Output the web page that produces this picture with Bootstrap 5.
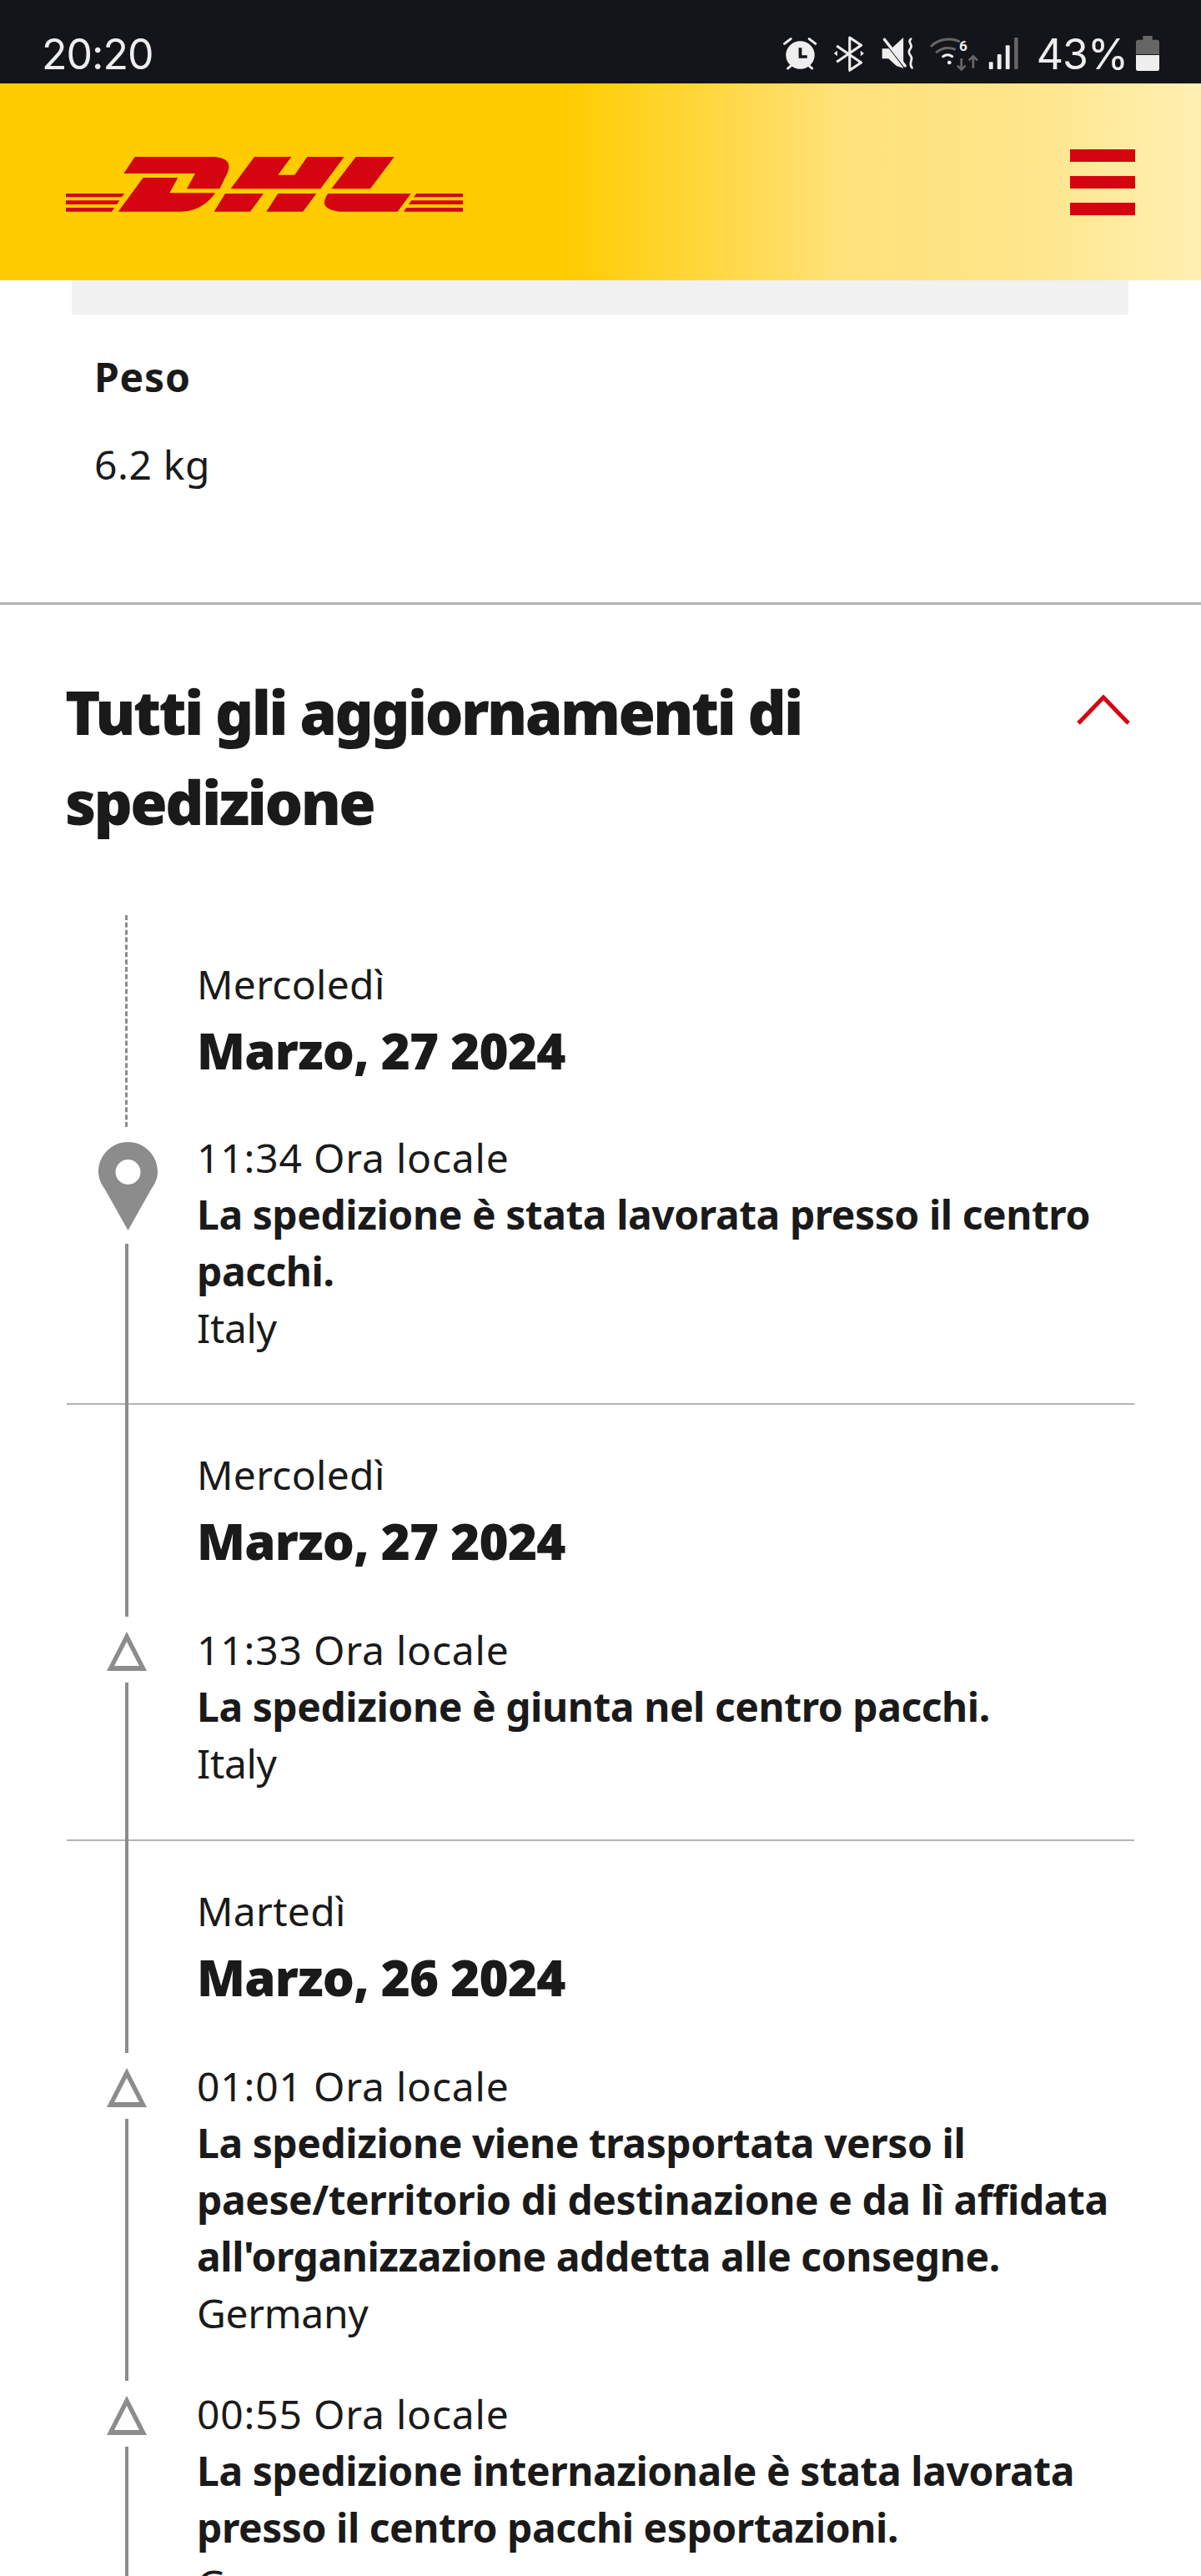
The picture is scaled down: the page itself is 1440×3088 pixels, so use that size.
<!DOCTYPE html>
<html lang="it">
<head>
<meta charset="utf-8">
<title>Tracking DHL</title>
<link href="https://cdn.jsdelivr.net/npm/bootstrap@5.3.0/dist/css/bootstrap.min.css" rel="stylesheet">
<style>
  html, body { height: 3088px; overflow: hidden; }
  body { background: #fff; color: #1a1a1a; font-family: "Noto Sans", "Liberation Sans", sans-serif; font-size: 48px; line-height: 68px; }

  .status-strip { height: 100px; background: #14151a; color: #eee; padding-left: 50px; padding-right: 50px; padding-top: 35px; font-family: Inter, Roboto, sans-serif; font-size: 50px; line-height: 60px; letter-spacing: -1px; }
  .status-icons { margin-top: 5px; }
  .status-pct { margin-left: 20px; margin-right: 10px; }
  .status-batt { margin-top: 8px; }

  .brand-bar { height: 236px; padding: 0 79px 0 60px; background: linear-gradient(90deg, #fc0 0, #fc0 47%, #ffe27a 70%, #ffe58a 85%, #fff0b2 100%); }
  .burger-mark { width: 78px; gap: 17px; }
  .burger-mark span { height: 15px; background: #d40511; }

  .grey-slab { height: 41px; margin: 0 87px 0 86px; background: #f1f1f1; }
  .weight-box { padding: 41px 0 0 113px; height: 348px; border-bottom: 3px solid #b3b3b3; }
  .weight-box p { margin: 0 0 37px; letter-spacing: .6px; }
  .weight-box .weight-label { font-weight: 700; letter-spacing: .8px; }

  .section-head { padding: 74px 85px 0 78px; height: 372px; }
  .section-head h2 { margin: 0; width: 980px; font-size: 72px; line-height: 108px; font-weight: 900; letter-spacing: -2.6px; color: #1a1a1a; }
  .section-head svg { margin-top: 34px; }

  .tl-group { margin: 0 80px; }
  .tl-group + .tl-group { border-top: 2px solid #b3b3b3; }
  .tl-row { display: flex; }
  .tl-rail { flex: 0 0 156px; width: 156px; display: flex; flex-direction: column; }
  .tl-line { flex: 1 1 auto; width: 4px; margin-left: 70px; margin-top: -2px; background: #8c8c8c; position: relative; }
  .tl-line-dashed { background: none; width: 3px; margin-top: 0; border-left: 3px dashed #8c8c8c; }
  .tl-icon { display: block; flex: none; margin-top: 18px; margin-bottom: 16px; }
  .tl-tri { width: 48px; height: 47px; margin-left: 48px; }
  .tl-pin { width: 71px; height: 106px; margin-left: 38px; margin-bottom: 18px; }

  .tl-date { padding: 50px 0 46px; }
  .tl-first .tl-date { padding-top: 49px; padding-bottom: 47px; }
  .tl-date p { margin: 0; letter-spacing: .3px; }
  .tl-date .date-main { font-size: 60px; line-height: 90px; font-weight: 900; letter-spacing: -.8px; }
  .tl-event { padding: 6px 0 57px; letter-spacing: -.35px; }
  .tl-first .tl-event { padding-top: 3px; padding-bottom: 56px; }
  .tl-event p { margin: 0; }
  .tl-event .ev-time { letter-spacing: .8px; }
  .tl-event .ev-title { font-weight: 700; letter-spacing: -.45px; }
  .tl-event-mid { padding-bottom: 47px; }
</style>
</head>
<body>

<!-- phone status bar -->
<div class="status-strip d-flex justify-content-between align-items-start">
  <span>20:20</span>
  <div class="d-flex align-items-start">
    <svg class="status-icons" width="310" height="60" viewBox="0 60 900 180" preserveAspectRatio="none">
      <!-- alarm -->
      <circle cx="135" cy="138" r="50" fill="#eee"/>
      <path d="M135 112v32h24" fill="none" stroke="#14151a" stroke-width="11"/>
      <path d="M80 97l22-17M188 97l-22-17M92 186l12-11M176 186l-12-11" stroke="#eee" stroke-width="9" stroke-linecap="round"/>
      <!-- bluetooth -->
      <path d="M262 105l85 60-40 28V75l40 28-85 60" fill="none" stroke="#eee" stroke-width="9" stroke-linejoin="round"/>
      <path d="M252 132l12-10v20zM357 132l-12-10v20z" fill="#eee"/>
      <!-- muted speaker -->
      <path d="M420 115h32l42-40v110l-24-8-28-26h-22z" fill="#eee"/>
      <path d="M422 80l78 105" stroke="#14151a" stroke-width="7"/>
      <path d="M428 82l72 95" stroke="#eee" stroke-width="10" stroke-linecap="round"/>
      <path d="M520 80c-14 12 8 20 0 32s-10 16 0 30-10 22 4 42" fill="none" stroke="#eee" stroke-width="8" stroke-linecap="round"/>
      <!-- wifi with generation mark and traffic arrows -->
      <path d="M592 105c24-24 62-30 95-17M610 127c20-16 42-18 62-10" fill="none" stroke="#666" stroke-width="9" stroke-linecap="round"/>
      <path d="M632 143c10-7 22-7 32 0" fill="none" stroke="#eee" stroke-width="9" stroke-linecap="round"/>
      <circle cx="654" cy="165" r="7" fill="#eee"/>
      <text x="688" y="122" font-family="Roboto, sans-serif" font-size="50" font-weight="700" fill="#eee">6</text>
      <path d="M696 150v38M682 176l14 14 14-14" fill="none" stroke="#666" stroke-width="8"/>
      <path d="M737 185v-40M722 157l15-15 15 15" fill="none" stroke="#666" stroke-width="8"/>
      <!-- signal bars -->
      <rect x="792" y="163" width="14" height="26" rx="3" fill="#eee"/>
      <rect x="821" y="135" width="14" height="54" rx="3" fill="#eee"/>
      <rect x="850" y="103" width="14" height="86" rx="3" fill="#eee"/>
      <rect x="880" y="75" width="13" height="114" rx="3" fill="#666"/>
    </svg>
    <span class="status-pct">43%</span>
    <svg class="status-batt" width="28" height="42" viewBox="0 0 27 44" preserveAspectRatio="none">
      <path d="M8 0h11v5h5a3 3 0 0 1 3 3v15H0V8a3 3 0 0 1 3-3h5z" fill="#666"/>
      <path d="M0 24h27v17a3 3 0 0 1-3 3H3a3 3 0 0 1-3-3z" fill="#eee"/>
    </svg>
  </div>
</div>

<!-- brand header -->
<header class="brand-bar d-flex justify-content-between align-items-center">
  <svg width="520" height="110" viewBox="0 0 1560 330" fill="#d40511" role="img" aria-label="DHL">
    <path d="M305 75H590Q670 80 630 150L610 190H492L522 135H265Z"/>
    <path d="M335 150H460L430 205H595Q545 272 470 272H245Z"/>
    <path d="M735 75H868L820 140H880L925 75H1058L973 190H650Z"/>
    <path d="M630 207H768L720 272H590ZM820 207H958L910 272H778Z"/>
    <path d="M1100 75H1238L1152 190H1012Z"/>
    <path d="M1000 207H1298L1250 272H1040Q960 262 1000 207Z"/>
    <path d="M57 207H268L258 220H57ZM57 232H250L240 246H57ZM57 258H232L222 272H57Z"/>
    <path d="M1318 207H1485V220H1308ZM1300 232H1485V246H1290ZM1282 258H1485V272H1272Z"/>
  </svg>
  <div class="burger-mark d-flex flex-column">
    <span></span><span></span><span></span>
  </div>
</header>

<!-- shipment details -->
<div class="grey-slab"></div>
<section class="weight-box">
  <p class="weight-label">Peso</p>
  <p>6.2 kg</p>
</section>

<!-- updates -->
<section class="section-head d-flex justify-content-between align-items-start">
  <h2>Tutti gli aggiornamenti di spedizione</h2>
  <svg width="64" height="36" viewBox="0 0 64 36"><path d="M2 34 32 3l30 31" fill="none" stroke="#d40511" stroke-width="5"/></svg>
</section>

<div class="tl-group tl-first">
  <div class="tl-row">
    <div class="tl-rail"><div class="tl-line tl-line-dashed"></div></div>
    <div class="tl-date"><p>Mercoledì</p><p class="date-main">Marzo, 27 2024</p></div>
  </div>
  <div class="tl-row">
    <div class="tl-rail">
      <svg class="tl-icon tl-pin" viewBox="0 0 71 106"><path fill="#8c8c8c" fill-rule="evenodd" d="M35.5 0C16 0 0 16 0 35.5 0 45 4 51 8 57l27.500 49L63 57c4-6 8-12 8-21.500C71 16 55 0 35.500 0zm0 21a15 15 0 1 1 0 30 15 15 0 0 1 0-30z"/></svg>
      <div class="tl-line"></div>
    </div>
    <div class="tl-event">
      <p class="ev-time">11:34 Ora locale</p>
      <p class="ev-title">La spedizione è stata lavorata presso il centro pacchi.</p>
      <p>Italy</p>
    </div>
  </div>
</div>

<div class="tl-group">
  <div class="tl-row">
    <div class="tl-rail"><div class="tl-line"></div></div>
    <div class="tl-date"><p>Mercoledì</p><p class="date-main">Marzo, 27 2024</p></div>
  </div>
  <div class="tl-row">
    <div class="tl-rail">
      <svg class="tl-icon tl-tri" viewBox="0 0 48 47"><path fill="#8c8c8c" fill-rule="evenodd" d="M24 0l24 47H0zm0 12L9 41h30z"/></svg>
      <div class="tl-line"></div>
    </div>
    <div class="tl-event">
      <p class="ev-time">11:33 Ora locale</p>
      <p class="ev-title">La spedizione è giunta nel centro pacchi.</p>
      <p>Italy</p>
    </div>
  </div>
</div>

<div class="tl-group">
  <div class="tl-row">
    <div class="tl-rail"><div class="tl-line"></div></div>
    <div class="tl-date"><p>Martedì</p><p class="date-main">Marzo, 26 2024</p></div>
  </div>
  <div class="tl-row">
    <div class="tl-rail">
      <svg class="tl-icon tl-tri" viewBox="0 0 48 47"><path fill="#8c8c8c" fill-rule="evenodd" d="M24 0l24 47H0zm0 12L9 41h30z"/></svg>
      <div class="tl-line"></div>
    </div>
    <div class="tl-event tl-event-mid">
      <p class="ev-time">01:01 Ora locale</p>
      <p class="ev-title">La spedizione viene trasportata verso il paese/territorio di destinazione e da lì affidata all'organizzazione addetta alle consegne.</p>
      <p>Germany</p>
    </div>
  </div>
  <div class="tl-row">
    <div class="tl-rail">
      <svg class="tl-icon tl-tri" viewBox="0 0 48 47"><path fill="#8c8c8c" fill-rule="evenodd" d="M24 0l24 47H0zm0 12L9 41h30z"/></svg>
      <div class="tl-line"></div>
    </div>
    <div class="tl-event">
      <p class="ev-time">00:55 Ora locale</p>
      <p class="ev-title">La spedizione internazionale è stata lavorata presso il centro pacchi esportazioni.</p>
      <p>Germany</p>
    </div>
  </div>
</div>

<script src="https://cdn.jsdelivr.net/npm/bootstrap@5.3.0/dist/js/bootstrap.bundle.min.js"></script>
</body>
</html>
